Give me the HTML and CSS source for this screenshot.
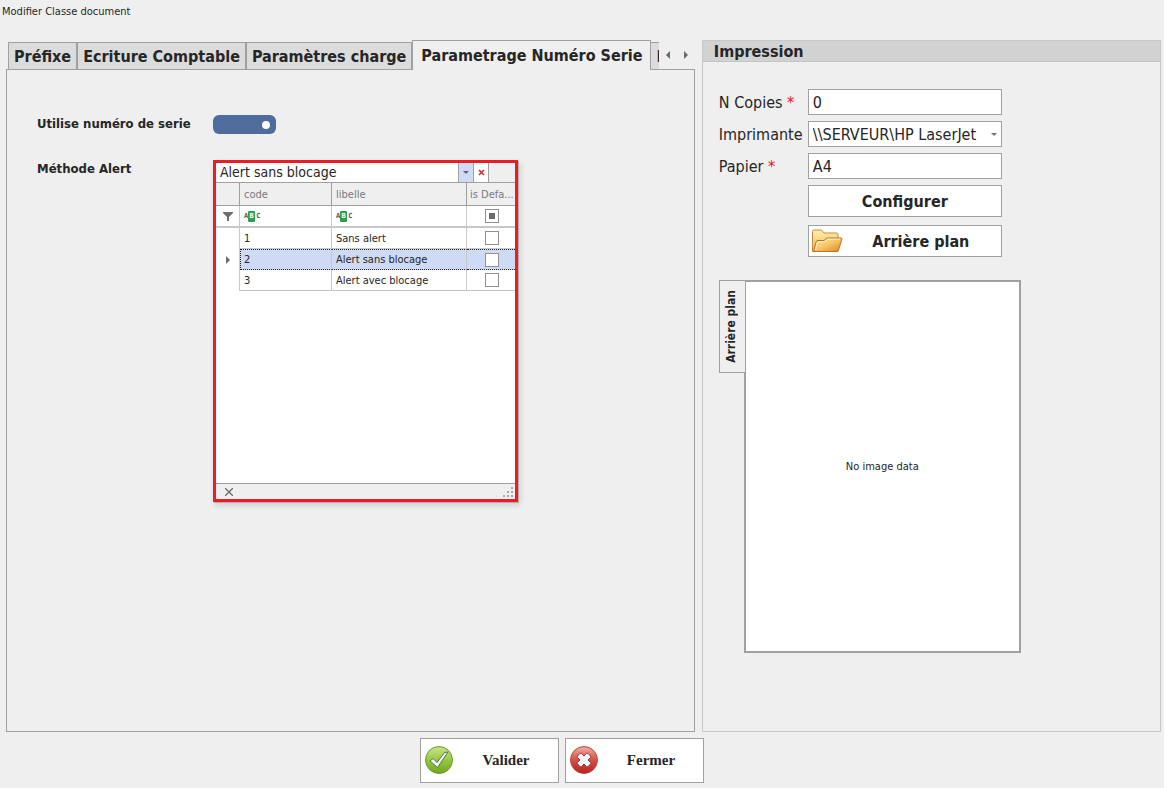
FILE: index.html
```html
<!DOCTYPE html>
<html lang="fr">
<head>
<meta charset="utf-8">
<title>Modifier Classe document</title>
<link rel="stylesheet" href="styles.css">
</head>
<body>
<div class="window">
  <header class="titlebar">Modifier Classe document</header>

  <main class="columns">
    <section class="tabbed">
      <div class="tabstrip">
        <div class="tabs" role="tablist">
          <button class="tab" role="tab" type="button">Préfixe</button>
          <button class="tab" role="tab" type="button">Ecriture Comptable</button>
          <button class="tab" role="tab" type="button">Paramètres charge</button>
          <button class="tab tab-active" role="tab" type="button" aria-selected="true">Parametrage Numéro Serie</button>
          <button class="tab" role="tab" type="button">I</button>
        </div>
        <div class="tab-scroll">
          <button class="scroll-btn" type="button" aria-label="Précédent"><svg width="4" height="8" viewBox="0 0 4 8"><path d="M4 0v8L0 4z" fill="#6a6a6a"/></svg></button>
          <button class="scroll-btn" type="button" aria-label="Suivant"><svg width="4" height="8" viewBox="0 0 4 8"><path d="M0 0v8l4-4z" fill="#6a6a6a"/></svg></button>
        </div>
      </div>

      <div class="tabpane">
        <label class="field-label" for="use-serial">Utilise numéro de serie</label>
        <input class="switch" type="checkbox" id="use-serial" checked>

        <label class="field-label" for="method">Méthode Alert</label>
        <div class="picker">
          <div class="combo">
            <input class="combo-input" id="method" type="text" value="Alert sans blocage">
            <button class="combo-btn combo-open" type="button" aria-label="Ouvrir"><svg width="6" height="3" viewBox="0 0 6 3"><path d="M0 0h6L3 3z" fill="#5c6470"/></svg></button>
            <button class="combo-btn" type="button" aria-label="Effacer"><svg width="7" height="7" viewBox="0 0 7 7"><path d="M1 1l5 5M6 1L1 6" stroke="#d02f3c" stroke-width="1.7"/></svg></button>
          </div>
          <div class="popup-body">
            <table class="grid">
              <colgroup><col class="col-mark"><col class="col-code"><col class="col-label"><col></colgroup>
              <thead>
                <tr class="grid-head"><th></th><th>code</th><th>libelle</th><th>is Defa...</th></tr>
                <tr class="grid-filter">
                  <td class="mark"><svg width="10" height="9" viewBox="0 0 10 9"><path d="M0 0h10v1L6 5v4H4V5L0 1z" fill="#6e6e6e"/></svg></td>
                  <td><span class="abc">A<b>B</b>C</span></td>
                  <td><span class="abc">A<b>B</b>C</span></td>
                  <td class="check"><input class="box box-mixed" type="checkbox" aria-label="Filtre is Default"></td>
                </tr>
              </thead>
              <tbody>
                <tr><td class="mark"></td><td>1</td><td>Sans alert</td><td class="check"><input class="box" type="checkbox" aria-label="Sans alert"></td></tr>
                <tr class="selected"><td class="mark"><svg width="4" height="8" viewBox="0 0 4 8"><path d="M0 0v8l4-4z" fill="#6a6a6a"/></svg></td><td class="first">2</td><td>Alert sans blocage</td><td class="check"><input class="box" type="checkbox" aria-label="Alert sans blocage"></td></tr>
                <tr><td class="mark"></td><td>3</td><td>Alert avec blocage</td><td class="check"><input class="box" type="checkbox" aria-label="Alert avec blocage"></td></tr>
              </tbody>
            </table>
          </div>
          <div class="popup-foot">
            <button class="popup-close" type="button" aria-label="Fermer la liste"><svg width="8" height="8" viewBox="0 0 8 8"><path d="M0 0l8 8M8 0L0 8" stroke="#6a6a6a" stroke-width="1.300"/></svg></button>
            <svg width="11" height="11" viewBox="0 0 11 11" fill="#a8a8a8"><path d="M9 1h2v2H9zM9 5h2v2H9zM5 5h2v2H5zM9 9h2v2H9zM5 9h2v2H5zM1 9h2v2H1z"/></svg>
          </div>
        </div>
      </div>
    </section>

    <section class="group">
      <h2 class="group-title">Impression</h2>
      <div class="group-body">
        <div class="print-form">
          <label for="copies">N Copies <span class="req">*</span></label>
          <input class="input" id="copies" type="text" value="0">
          <label for="printer">Imprimante</label>
          <div class="select-wrap">
            <select class="input" id="printer"><option>\\SERVEUR\HP LaserJet</option></select>
            <svg class="select-arrow" width="6" height="3" viewBox="0 0 6 3"><path d="M0 0h6L3 3z" fill="#777"/></svg>
          </div>
          <label for="paper">Papier <span class="req">*</span></label>
          <input class="input" id="paper" type="text" value="A4">
          <div class="print-actions">
            <button class="action" type="button">Configurer</button>
            <button class="action action-icon" type="button">
              <svg width="32" height="26" viewBox="0 0 32 26">
                <defs>
                  <linearGradient id="fback" x1="0" y1="0" x2="0" y2="1"><stop offset="0" stop-color="#fff0ae"/><stop offset="1" stop-color="#eeb452"/></linearGradient>
                  <linearGradient id="ffront" x1="0" y1="0" x2="1" y2="1"><stop offset="0" stop-color="#ffe9ae"/><stop offset=".5" stop-color="#f6c464"/><stop offset="1" stop-color="#d98728"/></linearGradient>
                </defs>
                <path d="M1.500 23.500V3.500Q1.500 2 3 2h7.500l2.500 3h12.500q1.500 0 1.500 1.500V23.500z" fill="url(#fback)" stroke="#c98a35"/>
                <path d="M2.500 23.500L5 14q.5-1.500 2-1.500h6l3-2.500h14q1.200 0 .8 1.500L27.500 22q-.5 1.500-2 1.500z" fill="url(#ffront)" stroke="#b8741f"/>
                <path d="M4.500 22L6.500 14.500q.2-.8 1-.8h6l3-2.500h12.500" fill="none" stroke="#fff3cf"/>
              </svg>
              <span>Arrière plan</span>
            </button>
          </div>
        </div>
        <div class="preview">
          <button class="side-tab" type="button"><span>Arrière plan</span></button>
          <div class="preview-pane">No image data</div>
        </div>
      </div>
    </section>
  </main>

  <footer class="footer">
    <button class="dialog-btn" type="button">
      <svg width="30" height="30" viewBox="0 0 30 30">
        <defs><linearGradient id="ok" x1="0" y1="0" x2="0" y2="1"><stop offset="0" stop-color="#c9e58a"/><stop offset=".5" stop-color="#98c843"/><stop offset="1" stop-color="#6fa51c"/></linearGradient></defs>
        <circle cx="15" cy="14" r="13.500" fill="url(#ok)" stroke="#6f9a30"/>
        <path d="M6 15l3-2.500 4 4L20.500 6.500 24 6 13.500 21.500z" fill="#eef4fb" stroke="#557a38" stroke-linejoin="round"/>
      </svg>
      <span>Valider</span>
    </button>
    <button class="dialog-btn" type="button">
      <svg width="30" height="30" viewBox="0 0 30 30">
        <defs><linearGradient id="ko" x1="0" y1="0" x2="0" y2="1"><stop offset="0" stop-color="#efb1a6"/><stop offset=".45" stop-color="#d9574c"/><stop offset="1" stop-color="#b5201d"/></linearGradient></defs>
        <circle cx="15" cy="14" r="13.500" fill="url(#ko)" stroke="#b54a42"/>
        <path d="M8.500 10l2.500-2.500q1-.5 1.500 0l2.500 2.500 2.500-2.500q.8-.5 1.500 0L21.500 10q.5.800 0 1.500L19 14l2.500 2.500q.5.800 0 1.500L19 20.500q-.8.500-1.500 0L15 18l-2.500 2.500q-.8.500-1.500 0L8.500 18q-.5-.8 0-1.500L11 14l-2.500-2.500q-.5-.8 0-1.500z" fill="#eef2fa" stroke="#8e3a3c"/>
      </svg>
      <span>Fermer</span>
    </button>
  </footer>
</div>
</body>
</html>
```
FILE: styles.css
```css
* { box-sizing: border-box; }

body {
  margin: 0;
  padding-right: 4px;
  background: #fff;
  color: #262626;
  font-family: "DejaVu Sans Condensed", "DejaVu Sans", sans-serif;
  font-size: 11px;
}

button, input, select {
  margin: 0;
  padding: 0;
  border: 0;
  border-radius: 0;
  background: none;
  color: inherit;
  font: inherit;
}

svg { display: block; flex: none; }

.window {
  display: flex;
  flex-direction: column;
  min-height: 100vh;
  padding: 0 3px 5px 6px;
  background: #efefef;
}

.titlebar {
  height: 40px;
  margin-left: -4px;
  line-height: 24px;
}

.columns {
  flex: 1;
  display: grid;
  grid-template-columns: minmax(0, 3fr) minmax(0, 2fr);
  gap: 7px;
}

/* Tabs */
.tabbed { display: flex; flex-direction: column; }

.tabstrip {
  display: flex;
  justify-content: space-between;
  height: 30px;
  padding-left: 2px;
  margin-bottom: -1px;
}

.tabs {
  display: flex;
  align-items: flex-end;
  flex: 1;
  min-width: 0;
  overflow: hidden;
}

.tab {
  flex: none;
  height: 28px;
  padding: 0 5px;
  border: 1px solid #a0a0a0;
  background: #dcdcdc;
  font-size: 16px;
  font-weight: bold;
  white-space: nowrap;
}

.tab-active {
  position: relative;
  z-index: 1;
  height: 30px;
  padding: 0 8px;
  border-bottom: 0;
  background: #efefef;
}

.tab-active + .tab { border-left: 0; }

.tab-scroll {
  display: flex;
  align-items: center;
  width: 36px;
}

.scroll-btn {
  display: grid;
  place-items: center;
  width: 18px;
  height: 28px;
}

.tabpane {
  flex: 1;
  display: grid;
  grid-template-columns: 176px auto;
  justify-content: start;
  align-content: start;
  row-gap: 26px;
  padding: 45px 30px;
  border: 1px solid #a0a0a0;
}

.field-label {
  font-size: 13px;
  line-height: 18px;
  font-weight: bold;
}

.switch {
  appearance: none;
  display: flex;
  align-items: center;
  justify-content: flex-end;
  width: 63px;
  height: 19px;
  padding-right: 6px;
  border-radius: 6px;
  background: #4f6d9c;
}

.switch::before {
  content: "";
  width: 8px;
  height: 8px;
  border-radius: 50%;
  background: #fff;
}

/* Lookup list */
.picker {
  width: 305px;
  border: 3px solid #ed1c24;
  background: #efefef;
  box-shadow: 1px 1px 0 #b0b0b0, 2px 3px 6px rgba(0, 0, 0, .15);
}

.combo {
  display: flex;
  height: 20px;
  border-bottom: 1px solid #a0a0a0;
}

.combo-input {
  width: 242px;
  padding: 0 4px 2px;
  background: #fff;
  font-size: 14px;
}

.combo-btn {
  display: grid;
  place-items: center;
  width: 15px;
  border-right: 1px solid #a0a0a0;
  background: #fff;
}

.combo-open {
  width: 16px;
  border-left: 1px solid #a0a0a0;
  background: #cfdbf4;
}

.popup-body { min-height: 300px; background: #fff; }

.grid {
  width: 100%;
  border-spacing: 0;
  table-layout: fixed;
}

.col-mark { width: 24px; }
.col-code { width: 92px; }
.col-label { width: 135px; }

.grid th, .grid td {
  height: 21px;
  padding: 0 0 0 4px;
  border-right: 1px solid #c8c8c8;
  border-bottom: 1px solid #c8c8c8;
  text-align: left;
  font-weight: normal;
  white-space: nowrap;
}

.grid th:last-child, .grid td:last-child { border-right: 0; }

.grid .grid-head th {
  height: 23px;
  border-color: #a0a0a0;
  background: #efefef;
  color: #7a7a80;
}

.grid .grid-head th:last-child { padding-left: 3px; }
.grid .grid-filter td { border-bottom-width: 2px; height: 22px; }
.grid .mark { padding: 0; }
.grid tbody .mark { border-bottom: 0; }
.grid .mark svg { margin: 0 auto; }
.grid .check { padding: 0 0 0 2px; text-align: center; }

.grid .selected td:not(.mark) {
  border-top: 1px dotted #222;
  border-bottom: 1px dotted #222;
  background: #cfdbf4;
}

.grid .selected .first { border-left: 1px dotted #222; padding-left: 3px; }

.box {
  appearance: none;
  display: grid;
  place-items: center;
  width: 14px;
  height: 14px;
  margin: 0 auto;
  border: 1px solid #909090;
  background: #fff;
}

.box-mixed::before {
  content: "";
  width: 6px;
  height: 6px;
  background: #6a6a6a;
}

.abc {
  display: flex;
  align-items: center;
  color: #555;
  font: bold 7px/11px "DejaVu Sans Mono", monospace;
}

.abc b {
  width: 7px;
  margin-right: 1px;
  border-radius: 1px;
  background: #2f9e50;
  color: #fff;
  text-align: center;
}

.popup-foot {
  display: flex;
  align-items: center;
  justify-content: space-between;
  height: 16px;
  padding: 0 2px 0 9px;
  border-top: 1px solid #a0a0a0;
}

/* Print settings */
.group { border: 1px solid #c8c8c8; }

.group-title {
  margin: 0;
  height: 21px;
  padding-left: 11px;
  border-bottom: 1px solid #c4c4c4;
  background: #d2d2d2;
  font-size: 16px;
  line-height: 21px;
}

.group-body { padding: 27px 16px; }

.print-form {
  display: grid;
  grid-template-columns: 83px 194px;
  align-items: center;
  gap: 6px;
  font-size: 16px;
  white-space: nowrap;
}

.req { color: #f01020; }

.input {
  width: 100%;
  height: 26px;
  padding: 0 4px;
  border: 1px solid #a0a0a0;
  background: #fff;
}

.select-wrap { position: relative; height: 26px; }
.select-wrap .input { appearance: none; padding-right: 16px; }

.select-arrow {
  position: absolute;
  right: 5px;
  top: 12px;
  pointer-events: none;
}

.print-actions {
  grid-column: 2;
  display: flex;
  flex-direction: column;
  gap: 8px;
}

.action {
  height: 32px;
  border: 1px solid #a0a0a0;
  background: #fff;
  font-weight: bold;
}

.action-icon { display: flex; align-items: center; padding: 0 2px; }
.action-icon span { flex: 1; }

.preview { display: flex; align-items: flex-start; margin-top: 23px; }

.side-tab {
  position: relative;
  display: grid;
  place-items: center;
  width: 27px;
  height: 93px;
  padding-right: 2px;
  margin-right: -2px;
  border: 1px solid #a0a0a0;
  background: #efefef;
  font-size: 12px;
  font-weight: bold;
}

.side-tab span { writing-mode: vertical-rl; transform: rotate(180deg); }

.preview-pane {
  display: grid;
  place-items: center;
  width: 277px;
  height: 373px;
  border: 2px solid #a0a0a0;
  background: #fff;
}

/* Dialog buttons */
.footer {
  display: flex;
  justify-content: center;
  gap: 6px;
  padding: 6px 0 0;
  margin-right: 44px;
}

.dialog-btn {
  display: flex;
  align-items: center;
  width: 139px;
  height: 45px;
  padding: 0 4px 0 3px;
  border: 1px solid #a0a0a0;
  background: #fff;
  font: bold 15px "Liberation Serif", serif;
}

.dialog-btn span { flex: 1; padding-left: 5px; }
```
